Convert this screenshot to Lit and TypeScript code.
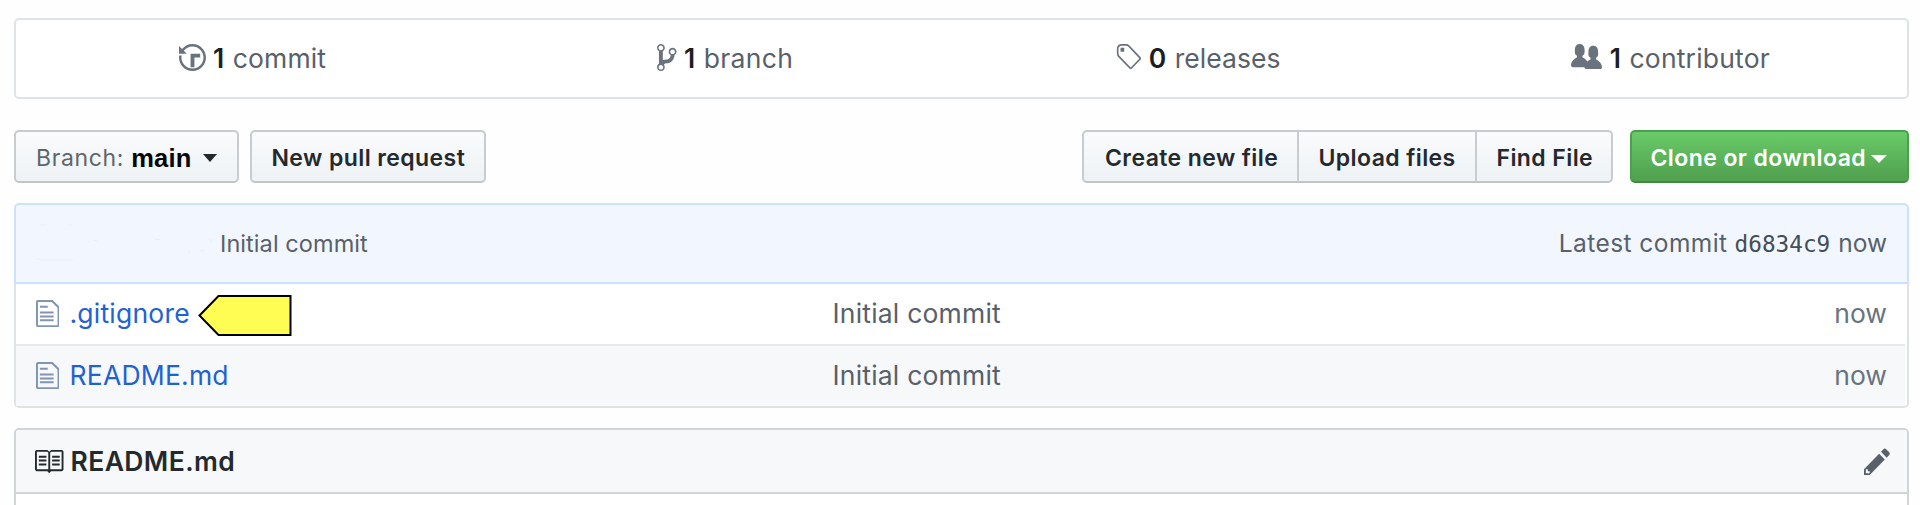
import { LitElement, html, svg, css } from "lit";
import { customElement } from "lit/decorators.js";

const ICONS = {
  history: { box: "0 0 14 16", w: 27, d: "M8 13H6V6h5v2H8v5zM7 1C4.81 1 2.87 2.02 1.59 3.59L0 2v4h4L2.5 4.5C3.55 3.17 5.17 2.3 7 2.3c3.14 0 5.7 2.56 5.7 5.7s-2.56 5.7-5.7 5.7A5.71 5.71 0 0 1 1.3 8c0-.34.03-.67.09-1H.08C.03 7.33 0 7.66 0 8c0 3.86 3.14 7 7 7s7-3.14 7-7-3.14-7-7-7z" },
  branch: { box: "0 0 10 16", w: 19.5, d: "M10 5c0-1.11-.89-2-2-2a1.993 1.993 0 0 0-1 3.72v.3c-.02.52-.23.98-.63 1.38-.4.4-.86.61-1.38.63-.83.02-1.48.16-2 .45V4.72a1.993 1.993 0 0 0-1-3.72C.88 1 0 1.89 0 3a2 2 0 0 0 1 1.72v6.56c-.59.35-1 .99-1 1.72 0 1.11.89 2 2 2 1.11 0 2-.89 2-2 0-.53-.2-1-.53-1.36.09-.06.48-.41.59-.47.25-.11.56-.17.94-.17 1.05-.05 1.95-.45 2.75-1.25S8.95 7.77 9 6.73h-.02C9.59 6.37 10 5.73 10 5zM2 1.8c.66 0 1.2.55 1.2 1.2 0 .65-.55 1.2-1.2 1.2C1.35 4.2.8 3.65.8 3c0-.65.55-1.2 1.2-1.2zm0 12.41c-.66 0-1.2-.55-1.2-1.2 0-.65.55-1.2 1.2-1.2.65 0 1.2.55 1.2 1.2 0 .65-.55 1.2-1.2 1.2zm6-8c-.66 0-1.2-.55-1.2-1.2 0-.65.55-1.2 1.2-1.2.65 0 1.2.55 1.2 1.2 0 .65-.55 1.2-1.2 1.2z" },
  tag: { box: "0 0 14 16", w: 26, d: "M7.685 1.72a2.49 2.49 0 0 0-1.76-.726H3.48A2.5 2.5 0 0 0 .994 3.48v2.456c0 .656.269 1.292.726 1.76l6.024 6.024a.99.99 0 0 0 1.402 0l4.563-4.563a.99.99 0 0 0 0-1.402L7.685 1.72zM2.366 7.048a1.54 1.54 0 0 1-.467-1.123V3.48c0-.874.716-1.58 1.58-1.58h2.456c.418 0 .825.159 1.123.467l6.104 6.094-4.702 4.702-6.094-6.114zm.626-4.066h1.989v1.989H2.982V2.982h.01z" },
  people: { box: "0 0 16 16", w: 31, d: "M16 12.999c0 .439-.45 1-1 1H7.995c-.539 0-.994-.447-.995-.999H1c-.54 0-1-.561-1-1 0-2.634 3-4 3-4s.229-.409 0-1c-.841-.621-1.058-.59-1-3 .058-2.419 1.367-3 2.5-3s2.442.58 2.5 3c.058 2.41-.159 2.379-1 3-.229.59 0 1 0 1s1.549.711 2.42 2.088C9.196 9.369 10 8.999 10 8.999s.229-.409 0-1c-.841-.62-1.058-.59-1-3 .058-2.419 1.367-3 2.5-3s2.437.581 2.495 3c.059 2.41-.158 2.38-1 3-.229.59 0 1 0 1s3.005 1.366 3.005 4z" },
  file: { box: "0 0 12 16", w: 23.5, d: "M6 5H2V4h4v1zM2 8h7V7H2v1zm0 2h7V9H2v1zm0 2h7v-1H2v1zm10-7.5V14c0 .55-.45 1-1 1H1c-.55 0-1-.45-1-1V2c0-.55.45-1 1-1h7.5L12 4.5zM11 5L8 2H1v12h10V5z" },
  book: { box: "1 0 15 16", w: 28.5, d: "M3 5h4v1H3V5zm0 3h4V7H3v1zm0 2h4V9H3v1zm11-5h-4v1h4V5zm0 2h-4v1h4V7zm0 2h-4v1h4V9zm2-6v9c0 .55-.45 1-1 1H9.5l-1 1-1-1H2c-.55 0-1-.45-1-1V3c0-.55.45-1 1-1h5.5l1 1 1-1H15c.55 0 1 .45 1 1zm-8 .5L7.5 3H2v9h6V3.5zm7-.5H9.5l-.5.5V12h6V3z" },
  pencil: { box: "0 0 14 16", w: 26.5, d: "M0 12v3h3l8-8-3-3-8 8zm3 2H1v-2h1v1h1v1zm10.3-9.3L12 6 9 3l1.3-1.3a.996.996 0 0 1 1.41 0l1.59 1.59c.39.39.39 1.02 0 1.41z" },
} as const;

type IconName = keyof typeof ICONS;

const icon = (name: IconName) => {
  const i = ICONS[name];
  return html`<svg class="icon ${name}" width=${i.w} height="31" viewBox=${i.box} preserveAspectRatio="none" aria-hidden="true">
    ${svg`<path fill-rule="evenodd" d=${i.d}></path>`}
  </svg>`;
};

const STATS: { icon: IconName; count: number; label: string }[] = [
  { icon: "history", count: 1, label: "commit" },
  { icon: "branch", count: 1, label: "branch" },
  { icon: "tag", count: 0, label: "releases" },
  { icon: "people", count: 1, label: "contributor" },
];

const FILES = [
  { name: ".gitignore", message: "Initial commit", age: "now", flagged: true },
  { name: "README.md", message: "Initial commit", age: "now", flagged: false },
];

@customElement("app-root")
export class AppRoot extends LitElement {
  static styles = css`
    :host {
      display: block;
      box-sizing: border-box;
      height: 505px;
      overflow: hidden;
      padding: 18px 11px 0 14px;
      background: #fefefe;
      color: #586069;
      font: 400 26.5px/32px Inter, "Liberation Sans", sans-serif;
      white-space: nowrap;
    }
    * { box-sizing: border-box; }
    svg { display: block; flex: none; }
    .icon { fill: #6a737d; }

    .summary {
      display: grid;
      grid-template-columns: repeat(4, 1fr);
      height: 81px;
      border: 2px solid #dfe3e8;
      border-radius: 5px;
      background: #fff;
    }
    .stat {
      display: flex;
      align-items: center;
      justify-content: center;
      gap: 7.5px;
      padding-bottom: 2px;
    }
    .stat strong { margin-right: 1px; color: #1b1f23; font-weight: 600; }
    .label { letter-spacing: 0.05px; }
    .label.history { letter-spacing: 0.15px; }
    .label.branch { letter-spacing: 0.3px; }
    .label.people { letter-spacing: 0.2px; }

    .toolbar {
      display: flex;
      margin-top: 31px;
      height: 53px;
    }
    .btn {
      display: flex;
      align-items: center;
      height: 53px;
      padding: 3px 19.5px 0;
      border: 2px solid #c8ccd0;
      border-bottom-color: #c0c4c8;
      border-radius: 5px;
      background: linear-gradient(#fafbfc, #eff3f6 90%);
      color: #24292e;
      font-size: 23px;
      font-weight: 600;
      letter-spacing: 0.41px;
    }
    .select { width: 225px; padding-left: 20px; margin-right: 11px; }
    .prefix { color: #5f666b; font-weight: 400; letter-spacing: 0.65px; }
    .current {
      margin-left: 7px;
      color: #050505;
      font: 700 25.5px/32px "Liberation Sans", Arial, sans-serif;
      letter-spacing: 0.2px;
    }
    .caret {
      border: 7.5px solid transparent;
      border-top: 8.5px solid currentColor;
      border-bottom: 0;
    }
    .select .caret { margin-left: 11.5px; margin-top: -1px; }
    .pull { width: 236px; }
    .group { display: flex; margin-left: auto; }
    .group .btn + .btn { margin-left: -2px; }
    .group .btn:not(:last-child) { border-top-right-radius: 0; border-bottom-right-radius: 0; }
    .group .btn:not(:first-child) { border-top-left-radius: 0; border-bottom-left-radius: 0; }
    .create { width: 217px; padding-left: 21px; }
    .upload { width: 180px; }
    .find { width: 138px; }
    .clone {
      width: 279px;
      margin-left: 17px;
      padding-left: 18.5px;
      border-color: #4ba04c;
      border-bottom-color: #43883f;
      background: linear-gradient(#6acb69, #52a350 90%);
      color: #fff;
    }
    .clone .caret {
      margin: 2px 0 0 5px;
      border-left-width: 8px;
      border-right-width: 8px;
    }

    .files { margin-top: 20px; }
    .tease {
      display: flex;
      align-items: center;
      height: 81px;
      padding: 0 20px 0 20px;
      border: 2px solid #cbe1fd;
      border-radius: 5px 5px 0 0;
      background: #f2f7ff;
      font-size: 24.5px;
    }
    .author { width: 184px; height: 40px; }
    .headline { font-size: 23.5px; letter-spacing: 0.07px; }
    .latest { display: flex; align-items: baseline; margin-left: auto; }
    .latest .text { letter-spacing: 0.45px; }
    .sha {
      margin: 0 8px 0 7px;
      color: #444d56;
      font-family: "DejaVu Sans Mono", monospace;
      font-size: 22.7px;
    }
    .rows {
      padding-right: 2px;
      border: 2px solid #dfe2e7;
      border-top: 0;
      border-radius: 0 0 5px 5px;
      background: #fff;
    }
    .row {
      display: grid;
      grid-template-columns: 797px 1fr auto;
      align-items: center;
      height: 60px;
      padding: 0 18px 2px 19.5px;
    }
    .row + .row {
      height: 62px;
      border-top: 2px solid #e7eaed;
      background: #f6f8fa;
    }
    .name { display: flex; align-items: center; height: 32px; }
    .file.icon { margin-right: 10.5px; fill: #8095b2; }
    .link { color: #1f62d3; letter-spacing: 0.22px; }
    .message { letter-spacing: 0.2px; }
    .age { color: #6a737d; }
    .flag { margin: 6px 0 0 8px; }

    .readme {
      margin-top: 20px;
      height: 100px;
      border: 2px solid #d1d5da;
      border-radius: 5px;
      background: #fff;
    }
    .title {
      display: flex;
      align-items: center;
      height: 64px;
      padding: 0 19px;
      border-bottom: 2px solid #d1d5da;
      border-radius: 3px 3px 0 0;
      background: #f6f8fa;
      color: #24292e;
      font-weight: 600;
      letter-spacing: 0.4px;
    }
    .book.icon { margin-right: 7px; fill: #24292e; }
    .pencil.icon { margin: 0 -2px 0 auto; fill: #586069; }
  `;

  render() {
    return html`
      <div class="summary">
        ${STATS.map((s) => html`
          <div class="stat">${icon(s.icon)}<strong>${s.count}</strong><span class="label ${s.icon}">${s.label}</span></div>
        `)}
      </div>

      <div class="toolbar">
        <div class="btn select"><span class="prefix">Branch:</span><span class="current">main</span><i class="caret"></i></div>
        <div class="btn pull">New pull request</div>
        <div class="group">
          <div class="btn create">Create new file</div>
          <div class="btn upload">Upload files</div>
          <div class="btn find">Find File</div>
        </div>
        <div class="btn clone">Clone or download<i class="caret"></i></div>
      </div>

      <div class="files">
        <div class="tease">
          <svg class="author" viewBox="0 0 184 40" fill="none" stroke="#e8eef7" stroke-width="1.2" aria-hidden="true">
            <path d="M1 35l6 1h30M4 1h7M32 1h4" />
            <path d="M58 16l3 1M118 15l6 1M152 27l2 1M165 27l3-1M174 15l2 4" />
          </svg>
          <span class="headline">Initial commit</span>
          <span class="latest"><span class="text">Latest commit</span><span class="sha">d6834c9</span><span>now</span></span>
        </div>
        <div class="rows">
          ${FILES.map((f) => html`
            <div class="row">
              <div class="name">
                ${icon("file")}<span class="link">${f.name}</span>
                ${f.flagged ? html`<svg class="flag" width="94" height="42" viewBox="0 0 94 42">
                  <path d="M1.5 20.5L20.5 1H92.5V40H20.5z" fill="#fffd54" stroke="#000" stroke-width="2" />
                </svg>` : ""}
              </div>
              <span class="message">${f.message}</span>
              <span class="age">${f.age}</span>
            </div>
          `)}
        </div>
      </div>

      <div class="readme">
        <div class="title">${icon("book")}README.md${icon("pencil")}</div>
      </div>
    `;
  }
}
